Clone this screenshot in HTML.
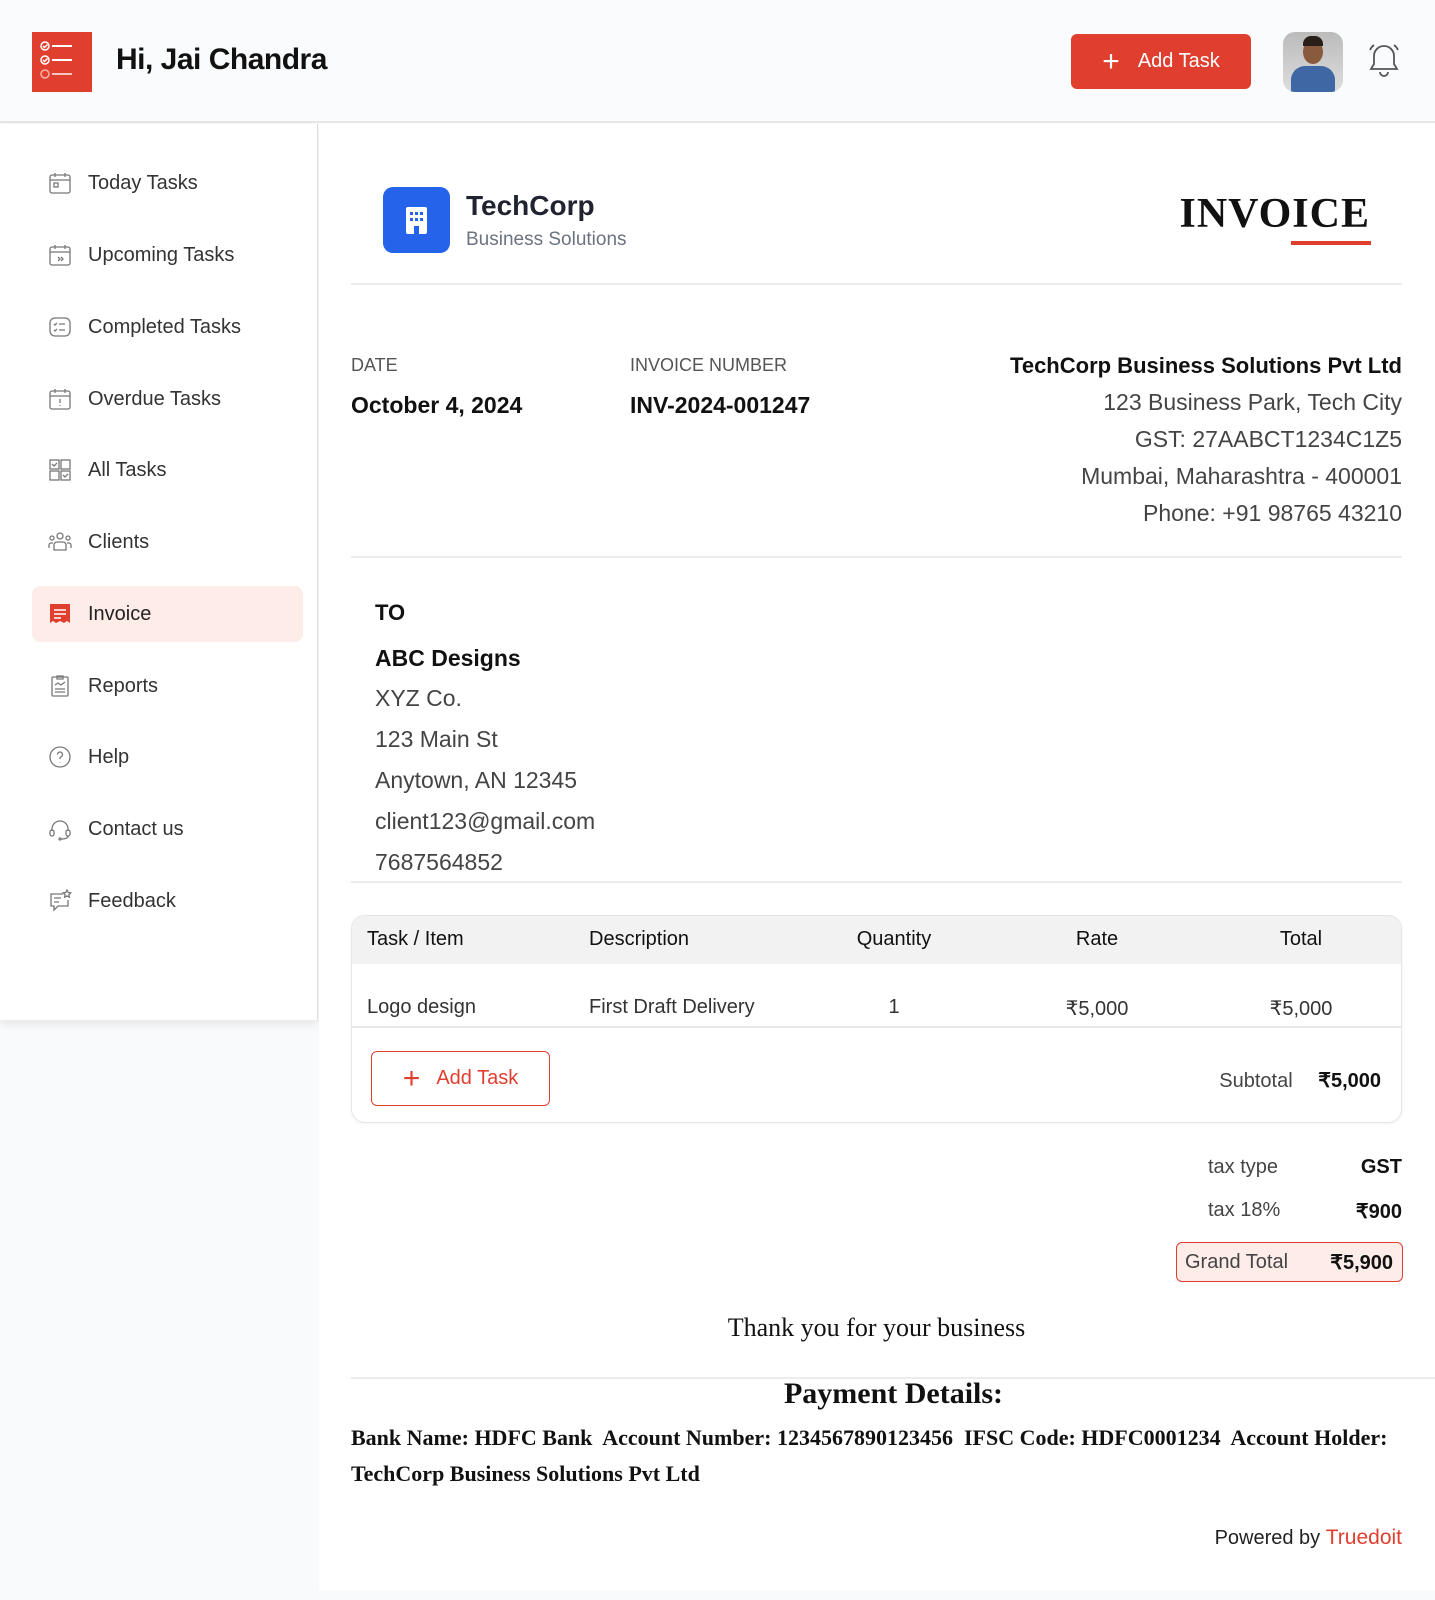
<!DOCTYPE html>
<html><head><meta charset="utf-8"><style>
*{margin:0;padding:0;box-sizing:border-box}
body{width:1435px;height:1600px;background:#f9fafb;font-family:"Liberation Sans",sans-serif;color:#111;position:relative;overflow:hidden}
.a{position:absolute}
.hdr{left:0;top:0;width:1435px;height:123px;background:#fafbfc;border-bottom:2px solid #e6e6e6}
.side{left:0;top:124px;width:318px;height:896px;background:#fff;border-right:1px solid #ddd;box-shadow:0 4px 8px rgba(0,0,0,.08)}
.main{left:319px;top:124px;width:1116px;height:1466px;background:#fff}
.it{position:absolute;left:48px;font-size:20px;color:#333;display:flex;align-items:center;height:30px}
.it svg{width:24px;height:24px;margin-right:16px}
.it span{position:absolute;left:40px;white-space:nowrap}
.ser{font-family:"Liberation Serif",serif}
.r{text-align:right}
.ln{height:2px;background:#ececec}
.th{font-size:20px;color:#111}
.td{font-size:20px;color:#333}
</style></head><body>
<div class="a hdr"></div>
<div class="a" style="left:32px;top:32px;width:60px;height:60px;background:#e03f2f">
<svg width="60" height="60" viewBox="0 0 60 60" fill="none" stroke="#fff" stroke-width="1.5"><circle cx="13" cy="14" r="4"/><path d="M11 14l1.5 1.5 3-3"/><path d="M20 14h20" stroke-width="2"/><circle cx="13" cy="28" r="4"/><path d="M11 28l1.5 1.5 3-3"/><path d="M20 28h20" stroke-width="2"/><circle cx="13" cy="42" r="4" opacity=".6"/><path d="M20 42h20" stroke-width="2" opacity=".7"/></svg></div>
<div class="a" style="left:116px;top:43px;font-size:30px;font-weight:bold;letter-spacing:-0.5px">Hi, Jai Chandra</div>
<div class="a" style="left:1071px;top:34px;width:180px;height:55px;background:#e03f2f;border-radius:6px;color:#fff;font-size:20px;display:flex;align-items:center;justify-content:center"><span style="font-size:30px;margin-right:18px;font-weight:300">+</span>Add Task</div>
<div class="a" style="left:1283px;top:32px;width:60px;height:60px;border-radius:12px;background:linear-gradient(#bbb,#ddd);overflow:hidden"><div class="a" style="left:20px;top:8px;width:20px;height:24px;border-radius:50%;background:#8a5a3c"></div><div class="a" style="left:20px;top:4px;width:20px;height:10px;border-radius:8px 8px 0 0;background:#2a1e18"></div><div class="a" style="left:8px;top:34px;width:44px;height:30px;border-radius:14px 14px 0 0;background:#3f67a3"></div></div>
<svg class="a" style="left:1366px;top:42px" width="36" height="38" viewBox="0 0 36 38" fill="none" stroke="#555" stroke-width="1.8"><path d="M18 4a10 10 0 0 1 10 10v8l3 5H5l3-5v-8A10 10 0 0 1 18 4z"/><path d="M14 30a4 4 0 0 0 8 0"/><path d="M4 8a12 12 0 0 1 4-5M32 8a12 12 0 0 0-4-5"/></svg>

<div class="a side">
<div class="a" style="left:32px;top:462px;width:271px;height:56px;background:#fdece8;border-radius:8px"></div>
<div class="it" style="top:44px"><svg viewBox="0 0 24 24" fill="none" stroke="#777" stroke-width="1.3"><rect x="2" y="4" width="20" height="18" rx="2"/><path d="M2 9h20M7 2v4M17 2v4"/><rect x="6" y="12" width="4" height="4"/></svg><span>Today Tasks</span></div>
<div class="it" style="top:116px"><svg viewBox="0 0 24 24" fill="none" stroke="#777" stroke-width="1.3"><rect x="2" y="4" width="20" height="18" rx="2"/><path d="M2 9h20M7 2v4M17 2v4M10 14l2 2-2 2M13 14l2 2-2 2"/></svg><span>Upcoming Tasks</span></div>
<div class="it" style="top:188px"><svg viewBox="0 0 24 24" fill="none" stroke="#777" stroke-width="1.3"><rect x="2" y="3" width="20" height="18" rx="5"/><path d="M11 9h6M11 15h6M6 9l1 1 2-2M6 15l1 1 2-2"/></svg><span>Completed Tasks</span></div>
<div class="it" style="top:260px"><svg viewBox="0 0 24 24" fill="none" stroke="#777" stroke-width="1.3"><rect x="2" y="4" width="20" height="18" rx="2"/><path d="M2 9h20M7 2v4M17 2v4M12 12v4M12 18v1"/></svg><span>Overdue Tasks</span></div>
<div class="it" style="top:331px"><svg viewBox="0 0 24 24" fill="none" stroke="#777" stroke-width="1.3"><rect x="2" y="2" width="9" height="9"/><rect x="13" y="2" width="9" height="9"/><rect x="2" y="13" width="9" height="9"/><rect x="13" y="13" width="9" height="9"/><path d="M4 6l2 2 3-3M15 17l2 2 3-3"/></svg><span>All Tasks</span></div>
<div class="it" style="top:403px"><svg viewBox="0 0 24 24" fill="none" stroke="#777" stroke-width="1.3"><circle cx="12" cy="6" r="3"/><circle cx="4" cy="8" r="2"/><circle cx="20" cy="8" r="2"/><path d="M6 20v-5a3 3 0 0 1 3-3h6a3 3 0 0 1 3 3v5zM1 18v-3a2 2 0 0 1 2-2h2M23 18v-3a2 2 0 0 0-2-2h-2"/></svg><span>Clients</span></div>
<div class="it" style="top:475px"><svg viewBox="0 0 24 24"><path d="M2 2h20v19l-3-2-3 2-4-2-4 2-3-2-3 2z" fill="#e03f2f"/><path d="M6 8h12M6 12h12M6 16h7" stroke="#fff" stroke-width="1.6"/></svg><span style="color:#222">Invoice</span></div>
<div class="it" style="top:547px"><svg viewBox="0 0 24 24" fill="none" stroke="#777" stroke-width="1.3"><rect x="4" y="3" width="16" height="19" rx="1"/><path d="M9 2h6v3H9zM7 11l3-2 3 2 4-3M7 15h10M7 18h10"/></svg><span>Reports</span></div>
<div class="it" style="top:618px"><svg viewBox="0 0 24 24" fill="none" stroke="#777" stroke-width="1.3"><circle cx="12" cy="12" r="10"/><path d="M9.5 9.5a2.5 2.5 0 1 1 3.5 2.3c-.7.3-1 .8-1 1.5v.7M12 17v.5"/></svg><span>Help</span></div>
<div class="it" style="top:690px"><svg viewBox="0 0 24 24" fill="none" stroke="#777" stroke-width="1.3"><path d="M4 14v-2a8 8 0 0 1 16 0v2"/><rect x="2" y="13" width="4" height="6" rx="2"/><rect x="18" y="13" width="4" height="6" rx="2"/><path d="M20 19c0 2-3 3-7 3"/><circle cx="12" cy="22" r="1"/></svg><span>Contact us</span></div>
<div class="it" style="top:762px"><svg viewBox="0 0 24 24" fill="none" stroke="#777" stroke-width="1.3"><path d="M15 5H3v12h3v4l4-4h10v-6"/><path d="M6 9h7M6 13h5M19 1l1.2 2.4 2.6.4-1.9 1.8.5 2.6-2.4-1.2-2.4 1.2.5-2.6-1.9-1.8 2.6-.4z"/></svg><span>Feedback</span></div>
</div>

<div class="a main"></div>
<div class="a" style="left:383px;top:187px;width:67px;height:66px;background:#2563eb;border-radius:10px"><svg class="a" style="left:22px;top:20px" width="23" height="27" viewBox="0 0 23 27"><rect x="1" y="0" width="21" height="27" rx="2" fill="#fff"/><g fill="#2563eb"><rect x="5" y="5" width="3" height="3"/><rect x="10" y="5" width="3" height="3"/><rect x="15" y="5" width="3" height="3"/><rect x="5" y="11" width="3" height="3"/><rect x="10" y="11" width="3" height="3"/><rect x="15" y="11" width="3" height="3"/><rect x="9" y="19" width="5" height="8"/></g></svg></div>
<div class="a" style="left:466px;top:190px;font-size:28px;font-weight:bold;color:#1f2430">TechCorp</div>
<div class="a" style="left:466px;top:229px;font-size:19px;color:#6b7280">Business Solutions</div>
<div class="a ser" style="right:65px;top:190px;font-size:42px;font-weight:bold;letter-spacing:1px">INVOICE</div>
<div class="a" style="left:1291px;top:241px;width:80px;height:4px;background:#e03f2f"></div>
<div class="a ln" style="left:351px;top:283px;width:1051px"></div>

<div class="a" style="left:351px;top:355px;font-size:18px;color:#555">DATE</div>
<div class="a" style="left:351px;top:392px;font-size:23px;font-weight:bold">October 4, 2024</div>
<div class="a" style="left:630px;top:355px;font-size:18px;color:#555">INVOICE NUMBER</div>
<div class="a" style="left:630px;top:392px;font-size:23px;font-weight:bold">INV-2024-001247</div>
<div class="a r" style="right:33px;top:347px;font-size:23px;line-height:37px;color:#444"><b style="color:#111;font-size:22px">TechCorp Business Solutions Pvt Ltd</b><br>123 Business Park, Tech City<br>GST: 27AABCT1234C1Z5<br>Mumbai, Maharashtra - 400001<br>Phone: +91 98765 43210</div>
<div class="a ln" style="left:351px;top:556px;width:1051px"></div>

<div class="a" style="left:375px;top:600px;font-size:22px;font-weight:bold">TO</div>
<div class="a" style="left:375px;top:645px;font-size:23px;font-weight:bold">ABC Designs</div>
<div class="a" style="left:375px;top:678px;font-size:23px;line-height:41px;color:#444">XYZ Co.<br>123 Main St<br>Anytown, AN 12345<br>client123@gmail.com<br>7687564852</div>
<div class="a ln" style="left:351px;top:881px;width:1051px"></div>

<div class="a" style="left:351px;top:915px;width:1051px;height:208px;border:1.5px solid #e5e5e5;border-radius:14px;overflow:hidden;box-shadow:0 1px 3px rgba(0,0,0,.05)">
<div class="a" style="left:0;top:0;width:100%;height:48px;background:#f2f2f2"></div>
<div class="a" style="left:0;top:110px;width:100%;height:2px;background:#e8e8e8"></div>
</div>
<div class="a th" style="left:367px;top:928px">Task / Item</div>
<div class="a th" style="left:589px;top:928px">Description</div>
<div class="a th" style="left:834px;top:928px;width:120px;text-align:center">Quantity</div>
<div class="a th" style="left:1037px;top:928px;width:120px;text-align:center">Rate</div>
<div class="a th" style="left:1241px;top:928px;width:120px;text-align:center">Total</div>
<div class="a td" style="left:367px;top:996px">Logo design</div>
<div class="a td" style="left:589px;top:996px">First Draft Delivery</div>
<div class="a td" style="left:834px;top:996px;width:120px;text-align:center">1</div>
<div class="a td" style="left:1037px;top:996px;width:120px;text-align:center">₹5,000</div>
<div class="a td" style="left:1241px;top:996px;width:120px;text-align:center">₹5,000</div>
<div class="a" style="left:371px;top:1051px;width:179px;height:55px;border:1.5px solid #e03f2f;border-radius:6px;color:#e03f2f;font-size:20px;display:flex;align-items:center;justify-content:center"><span style="font-size:30px;margin-right:16px;font-weight:300">+</span>Add Task</div>
<div class="a" style="right:54px;top:1068px;font-size:20px;color:#444">Subtotal <b style="color:#111;margin-left:20px">₹5,000</b></div>

<div class="a" style="left:1208px;top:1156px;font-size:20px;color:#444">tax type</div>
<div class="a" style="right:33px;top:1156px;font-size:20px;font-weight:bold">GST</div>
<div class="a" style="left:1208px;top:1199px;font-size:20px;color:#444">tax 18%</div>
<div class="a" style="right:33px;top:1199px;font-size:20px;font-weight:bold">₹900</div>
<div class="a" style="left:1176px;top:1242px;width:227px;height:40px;background:#fdece8;border:1.5px solid #e03f2f;border-radius:6px;font-size:20px;display:flex;align-items:center;justify-content:space-between;padding:0 9px 0 8px"><span style="color:#444">Grand Total</span><b>₹5,900</b></div>

<div class="a ser" style="left:351px;width:1051px;text-align:center;top:1313px;font-size:26px">Thank you for your business</div>
<div class="a ln" style="left:351px;top:1377px;width:1084px"></div>
<div class="a ser" style="left:351px;width:1085px;text-align:center;top:1377px;font-size:30px;font-weight:bold">Payment Details:</div>
<div class="a ser" style="left:351px;width:1070px;top:1420px;font-size:22px;line-height:36px;font-weight:bold;white-space:nowrap">Bank Name: HDFC Bank&nbsp; Account Number: 1234567890123456&nbsp; IFSC Code: HDFC0001234&nbsp; Account Holder:<br>TechCorp Business Solutions Pvt Ltd</div>
<div class="a" style="right:33px;top:1526px;font-size:20px;color:#222">Powered by <span style="color:#e03f2f;font-size:21px">Truedoit</span></div>
</body></html>
